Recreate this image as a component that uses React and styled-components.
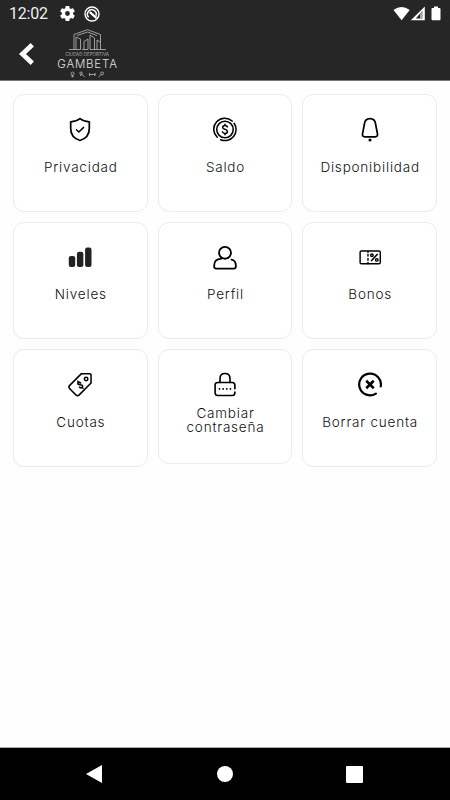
import React from 'react';
import styled, { createGlobalStyle } from 'styled-components';

const GlobalStyle = createGlobalStyle`
  body {
    margin: 0;
    background: #fefefe;
    font-family: Inter, "Liberation Sans", sans-serif;
  }
  svg {
    display: block;
    flex: none;
  }
`;

const Screen = styled.div`
  display: flex;
  flex-direction: column;
  height: 800px;
  width: 450px;
  overflow: hidden;
`;

const Header = styled.header`
  height: 80px;
  background: #262626;
  border-bottom: 1px solid #777;
  color: #fff;
`;

const StatusBar = styled.div`
  display: flex;
  align-items: center;
  height: 27px;
  padding: 0 7px 0 9px;
`;

const Clock = styled.span`
  width: 51px;
  font-family: Roboto, sans-serif;
  font-size: 16px;
  line-height: 28px;
  letter-spacing: -0.2px;
  color: #eee;
`;

const StatusIcons = styled.div`
  display: flex;
  align-items: center;
  gap: 9px;
`;

const SignalIcons = styled.div`
  margin-left: auto;
`;

const TopBar = styled.div`
  display: flex;
  height: 53px;
`;

const BackButton = styled.button`
  display: flex;
  align-items: center;
  width: 56px;
  padding: 0 0 0 18px;
  border: none;
  background: none;
  cursor: pointer;
`;

const Logo = styled.div`
  display: flex;
  flex-direction: column;
  align-items: center;
  width: 62px;
  padding-top: 2px;
`;

const LogoSmall = styled.span`
  font-size: 4.5px;
  line-height: 5px;
  color: #aaa;
  margin-top: 1px;
  white-space: nowrap;
`;

const LogoName = styled.span`
  font-size: 11.5px;
  font-weight: 300;
  line-height: 12px;
  letter-spacing: 0.8px;
  color: #e0e0e0;
  margin: 1px 0;
  padding-left: 1px;
`;

const Menu = styled.main`
  flex: 1;
  display: grid;
  grid-template-columns: repeat(3, 1fr);
  align-content: start;
  align-items: start;
  gap: 10px;
  padding: 13px 13px 0;
`;

const Card = styled.div`
  box-sizing: border-box;
  display: flex;
  flex-direction: column;
  align-items: center;
  height: ${(p) => (p.$short ? '115px' : '117.5px')};
  padding-top: 22px;
  border: 1px solid #ececec;
  border-radius: 11px;
  background: #fff;
`;

const Label = styled.div`
  display: flex;
  align-items: center;
  height: 28px;
  margin-top: ${(p) => (p.$short ? '9px' : '10.5px')};
  padding-left: 1px;
  font-size: 13.5px;
  font-weight: 300;
  line-height: 14px;
  letter-spacing: 0.8px;
  text-align: center;
  white-space: pre-line;
  color: #111;
`;

const NavBar = styled.nav`
  display: flex;
  justify-content: space-between;
  align-items: center;
  height: 52px;
  padding: 0 87px 0 86px;
  border-top: 1px solid #aaa;
  background: #000;
`;

const Icon = ({ children, width = 1.6 }) => (
  <svg width="24" height="25" viewBox="0 0 25 25" fill="none" stroke="#000"
    strokeWidth={width} strokeLinecap="round" strokeLinejoin="round">
    {children}
  </svg>
);

const ShieldIcon = () => (
  <Icon width={1.8}>
    <path d="M12.5 1.2C9.7 3.5 6.3 4.3 2.8 4.5V11.5C2.8 17.8 7 22.3 12.5 24C18 22.3 22.2 17.8 22.2 11.5V4.5C18.7 4.3 15.3 3.5 12.5 1.2Z" />
    <path d="M8.8 12.7L11.3 15.2L16.3 10.3" strokeWidth="1.5" />
  </Icon>
);

const CoinIcon = () => (
  <Icon width={1.6}>
    <circle cx="12.5" cy="12.5" r="8.6" />
    <path d="M4.4 20.6A11.5 11.5 0 0 1 20 3.7M22 6A11.5 11.5 0 0 1 8 23.1" />
    <path d="M15 9.8C14.6 8.8 13.7 8.4 12.5 8.4C11 8.4 10.1 9.1 10.1 10.3C10.1 13 15 11.7 15 14.5C15 15.8 14 16.6 12.5 16.6C11.1 16.6 10.2 16 9.9 15M12.5 7V8.4M12.5 16.6V18" />
  </Icon>
);

const BellIcon = () => (
  <Icon width={1.8}>
    <path d="M12.5 1.2C9 1.2 7 3.5 6.7 6.8L4.7 17.1C4.4 19 5.2 20.2 7 20.2H18C19.8 20.2 20.6 19 20.3 17.1L18.3 6.8C18 3.5 16 1.2 12.5 1.2Z" />
    <circle cx="12.5" cy="23.4" r="1.6" fill="#000" stroke="none" />
  </Icon>
);

const LevelsIcon = () => (
  <Icon>
    <g fill="#222" stroke="none">
      <rect x="0.8" y="11" width="6.7" height="11.5" rx="2.2" />
      <rect x="9.3" y="6.6" width="6.7" height="15.9" rx="2.2" />
      <rect x="17.8" y="2.2" width="6.7" height="20.3" rx="2.2" />
    </g>
  </Icon>
);

const UserIcon = () => (
  <Icon width={1.9}>
    <path d="M9.2 12.8A6.2 6.2 0 1 1 15.8 12.8" />
    <path d="M9.2 12.8C11.2 14 13.8 14 15.8 12.8M8.2 14C4 14.2 1.2 16.8 1.2 21V22C1.2 23.2 2 24 3.2 24H21.8C23 24 23.8 23.2 23.8 22V21C23.8 17 22 15.2 19.3 14.7" />
  </Icon>
);

const TicketIcon = () => (
  <Icon width={1.5}>
    <rect x="2.2" y="5.8" width="21" height="13.2" rx="1.3" />
    <path d="M10.4 6V7M10.4 9.2V11M10.4 13.5V15.3M10.4 17.8V19" />
    <path d="M14.2 15.7L20 9.4" strokeWidth="1.7" />
    <circle cx="14.5" cy="10.2" r="1.3" />
    <circle cx="19.6" cy="15" r="1.3" />
  </Icon>
);

const TagIcon = () => (
  <Icon width={1.6}>
    <path d="M14 1.2L22.8 1.2Q24 1.2 24 2.4V11L11.7 23.3C10.7 24.3 9.2 24.3 8.2 23.3L1.8 16.9C.8 15.9 .8 14.4 1.8 13.4Z" />
    <circle cx="18.9" cy="6.7" r="1.8" />
    <path d="M13.2 10.9C12.2 9.9 10.8 10.2 10.3 11.1C9.5 13.3 14.2 12.1 15.2 13.7C15.8 15.3 13.8 16.9 12 15.3M11.2 10.2L10.2 9.2M14.6 15.3L15.7 16.4" />
  </Icon>
);

const LockIcon = () => (
  <Icon width={1.7}>
    <path d="M7.3 10.4V6.4C7.3 3.3 9.3 1.1 12.5 1.1C15.7 1.1 17.7 3.3 17.7 6.4V10.4" />
    <path d="M22.8 17V13.2C22.8 11.4 21.7 10.4 20 10.4H5C3.2 10.4 2.2 11.4 2.2 13.2V21.2C2.2 23 3.2 24 5 24H20C21.7 24 22.8 23 22.8 21.2V20.5" />
    <path d="M6.7 17.1H6.8M10.5 17.1H10.6M14.3 17.1H14.4M18.1 17.1H18.2" strokeWidth="1.8" />
  </Icon>
);

const DeleteIcon = () => (
  <Icon width={2.3}>
    <path d="M23.7 14.4A11.3 11.3 0 1 0 18.6 22" />
    <path d="M8.6 8.6L16.4 16.4M16.4 8.6L8.6 16.4" strokeLinecap="butt" strokeWidth="2.6" />
  </Icon>
);

const SettingsIcon = () => (
  <svg width="15" height="15" viewBox="2 2 20 20" fill="#fff">
    <path fillRule="evenodd" d="M19.4 13a7.8 7.8 0 0 0 0-2l2.1-1.6a.5.5 0 0 0 .1-.7l-2-3.4a.5.5 0 0 0-.6-.2l-2.5 1a7.3 7.3 0 0 0-1.7-1l-.4-2.7A.5.5 0 0 0 14 2h-4a.5.5 0 0 0-.5.4l-.4 2.7a7.3 7.3 0 0 0-1.7 1L5 5.1a.5.5 0 0 0-.6.2l-2 3.4a.5.5 0 0 0 .1.7L4.6 11a7.8 7.8 0 0 0 0 2l-2.1 1.6a.5.5 0 0 0-.1.7l2 3.4c.1.2.4.3.6.2l2.4-1a7.3 7.3 0 0 0 1.7 1l.4 2.7c0 .2.2.4.5.4h4c.2 0 .5-.2.5-.4l.4-2.7a7.3 7.3 0 0 0 1.7-1l2.4 1c.2.1.5 0 .6-.2l2-3.4a.5.5 0 0 0-.1-.7zM12 15.2a3.2 3.2 0 1 1 0-6.4 3.2 3.2 0 0 1 0 6.4Z" />
  </svg>
);

const SpeedIcon = () => (
  <svg width="16" height="16" viewBox="0 0 16 16" fill="none" stroke="#fff">
    <circle cx="8" cy="8" r="7" strokeWidth="1.4" />
    <path d="M4.7 11.2A4.4 4.4 0 1 1 11.9 9.8" strokeWidth="1.5" />
    <path d="M5.8 6.2L12.4 11.9" strokeWidth="2.2" />
  </svg>
);

const BatteryIcons = () => (
  <svg width="50" height="16" viewBox="0 0 50 16" fill="#fff">
    <path d="M0.5 4Q8.5-1.8 16.7 4L8.6 14.2Z" />
    <path fillRule="evenodd" d="M31.8 .5V14.2H17.8ZM29.3 5L22.8 12.6H29.3Z" />
    <path d="M27 7.7L29.3 5V12.6H27Z" fill="#aaa" />
    <path d="M39 1.9H41V.5H45V1.9H46.5Q47.5 1.9 47.5 2.9V13.2Q47.5 14.2 46.5 14.2H39.5Q38.5 14.2 38.5 13.2V2.9Q38.5 1.9 39 1.9Z" />
  </svg>
);

const Skyline = () => (
  <svg width="37" height="22" viewBox="0 0 37 22" fill="none" stroke="#bdbdbd" strokeWidth=".8">
    <path d="M0 20.5H5V5.5L18.5 .7L31.5 5.5V20.5H37" />
    <path d="M7 20.5V8L11.5 10V20.5M15 20.5V12.5L19 10V20.5M21 20.5V6L25.5 9V20.5M28 20.5V11L31 13M8 6.5L18.5 3L28 6.5" />
    <path d="M5 20.5H11.5M13 20.5H19M21 20.5H31.5" />
  </svg>
);

const LogoSports = () => (
  <svg width="36" height="7" viewBox="0 0 36 7" fill="none" stroke="#aaa" strokeWidth=".9">
    <circle cx="3.5" cy="2.6" r="1.5" />
    <path d="M3.5 4V6.3M2 5.2H5" />
    <circle cx="12" cy="2.2" r="1.2" />
    <path d="M11 4.8L13 3.3L15.8 6" />
    <path d="M20 3.5H26.5M20.5 2V5M26 2V5" />
    <path d="M29.5 6L32.3 3.3" />
    <circle cx="33.2" cy="2.4" r="1.4" />
  </svg>
);

const items = [
  { label: 'Privacidad', icon: ShieldIcon },
  { label: 'Saldo', icon: CoinIcon },
  { label: 'Disponibilidad', icon: BellIcon },
  { label: 'Niveles', icon: LevelsIcon },
  { label: 'Perfil', icon: UserIcon },
  { label: 'Bonos', icon: TicketIcon },
  { label: 'Cuotas', icon: TagIcon },
  { label: 'Cambiar\ncontraseña', icon: LockIcon, short: true },
  { label: 'Borrar cuenta', icon: DeleteIcon },
];

function App() {
  return (
    <Screen>
      <GlobalStyle />
      <Header>
        <StatusBar>
          <Clock>12:02</Clock>
          <StatusIcons>
            <SettingsIcon />
            <SpeedIcon />
          </StatusIcons>
          <SignalIcons>
            <BatteryIcons />
          </SignalIcons>
        </StatusBar>
        <TopBar>
          <BackButton aria-label="Volver">
            <svg width="18" height="24" viewBox="0 0 18 24" fill="none" stroke="#fff" strokeWidth="4.8">
              <path d="M14.3 2.8L4.5 12L14.3 21.2" />
            </svg>
          </BackButton>
          <Logo>
            <Skyline />
            <LogoSmall>CIUDAD DEPORTIVA</LogoSmall>
            <LogoName>GAMBETA</LogoName>
            <LogoSports />
          </Logo>
        </TopBar>
      </Header>

      <Menu>
        {items.map(({ label, icon: ItemIcon, short }) => (
          <Card key={label} $short={short}>
            <ItemIcon />
            <Label $short={short}>{label}</Label>
          </Card>
        ))}
      </Menu>

      <NavBar>
        <svg width="16" height="18" viewBox="0 0 16 18" fill="#fff"><path d="M0 9L16 0V18Z" /></svg>
        <svg width="18" height="16" viewBox="0 0 18 16" fill="#fff"><circle cx="10" cy="8" r="8" /></svg>
        <svg width="17" height="17" viewBox="0 0 17 17" fill="#fff"><rect width="17" height="17" rx="1" /></svg>
      </NavBar>
    </Screen>
  );
}

export default App;
